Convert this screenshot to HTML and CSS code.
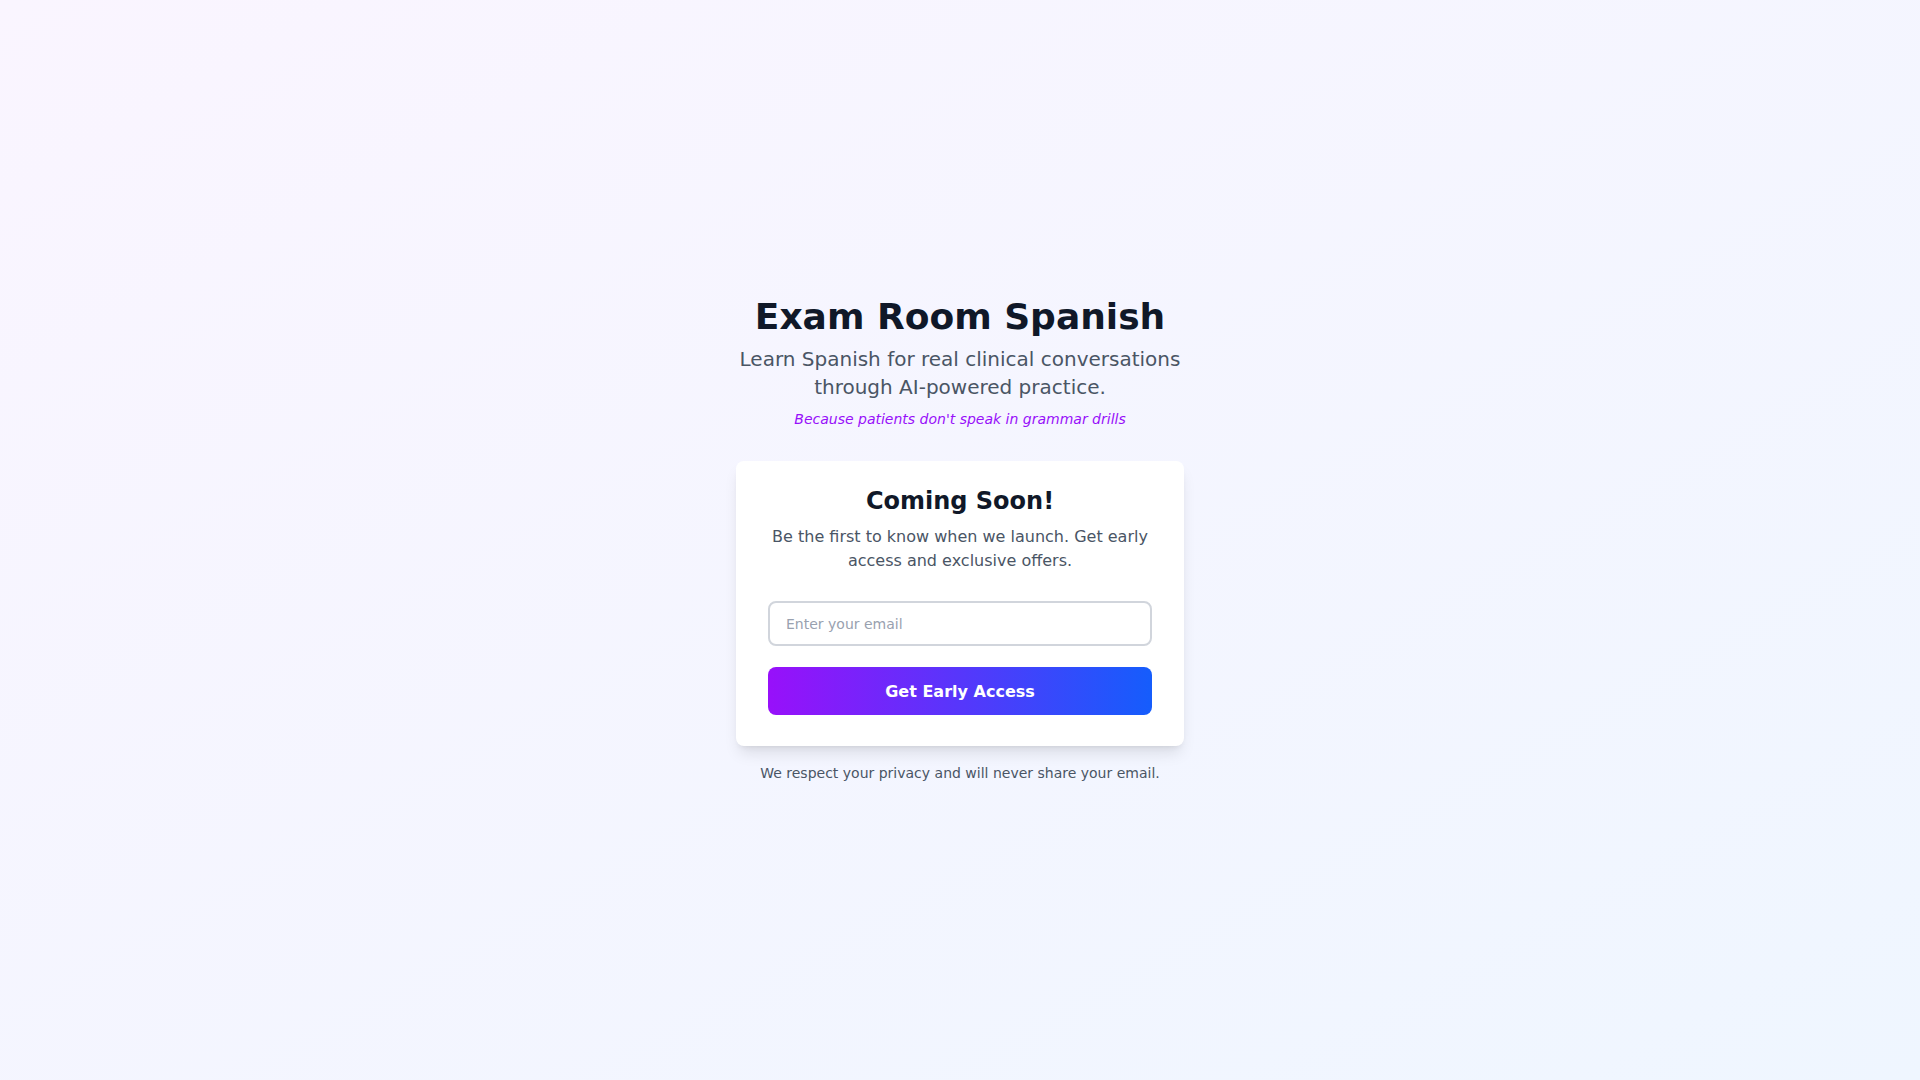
FILE: index.html
```html
<!DOCTYPE html>
<html lang="en">
<head>
<meta charset="utf-8">
<title>Exam Room Spanish</title>
<link rel="stylesheet" href="styles.css">
</head>
<body>
<main class="page">
  <div class="wrap">
    <header class="hero">
      <h1 class="title">Exam Room Spanish</h1>
      <p class="subtitle">Learn Spanish for real clinical conversations through AI-powered practice.</p>
      <p class="tagline">Because patients don't speak in grammar drills</p>
    </header>
    <section class="card">
      <h2 class="card-title">Coming Soon!</h2>
      <p class="card-text">Be the first to know when we launch. Get early access and exclusive offers.</p>
      <form class="form" onsubmit="return false;">
        <input class="email" type="email" placeholder="Enter your email">
        <button class="cta" type="submit">Get Early Access</button>
      </form>
    </section>
    <p class="privacy">We respect your privacy and will never share your email.</p>
  </div>
</main>
</body>
</html>
```

FILE: styles.css
```css
* { box-sizing: border-box; }
html, body { margin: 0; padding: 0; }
body {
  font-family: "DejaVu Sans", sans-serif;
  background: linear-gradient(to bottom right, #faf5ff, #eff6ff);
  min-height: 100vh;
}
.page {
  min-height: 100vh;
  display: flex;
  align-items: center;
  justify-content: center;
  padding: 0 16px;
}
.wrap {
  width: 100%;
  max-width: 448px;
  text-align: center;
}
.hero { margin-bottom: 32px; }
.title {
  margin: 0 0 8px;
  font-size: 36px;
  line-height: 40px;
  font-weight: 700;
  color: #101828;
}
.subtitle {
  margin: 0 0 8px;
  font-size: 20px;
  line-height: 28px;
  color: #4a5565;
}
.tagline {
  margin: 0;
  font-size: 14px;
  line-height: 20px;
  font-style: italic;
  color: #9810fa;
}
.card {
  background: #fff;
  border-radius: 8px;
  padding: 24px 32px 31px;
  box-shadow: 0 10px 15px -3px rgba(0,0,0,0.1), 0 4px 6px -4px rgba(0,0,0,0.1);
}
.card-title {
  margin: 0 0 8px;
  font-size: 24px;
  line-height: 32px;
  font-weight: 700;
  color: #101828;
}
.card-text {
  margin: 0 0 28px;
  font-size: 16px;
  line-height: 24px;
  color: #4a5565;
}
.form {
  display: flex;
  flex-direction: column;
  gap: 21px;
}
.email {
  width: 100%;
  height: 45px;
  padding: 0 16px;
  border: 2px solid #d1d5dc;
  border-radius: 8px;
  font-family: inherit;
  font-size: 14px;
  color: #101828;
  background: #fff;
  outline: none;
}
.email::placeholder { color: #99a1af; }
.cta {
  width: 100%;
  height: 48px;
  border: 0;
  border-radius: 8px;
  background: linear-gradient(to right, #9810fa, #155dfc);
  color: #fff;
  font-family: inherit;
  font-size: 16px;
  font-weight: 700;
  cursor: pointer;
}
.privacy {
  margin: 17px 0 0;
  font-size: 14px;
  line-height: 20px;
  color: #4a5565;
}
```
